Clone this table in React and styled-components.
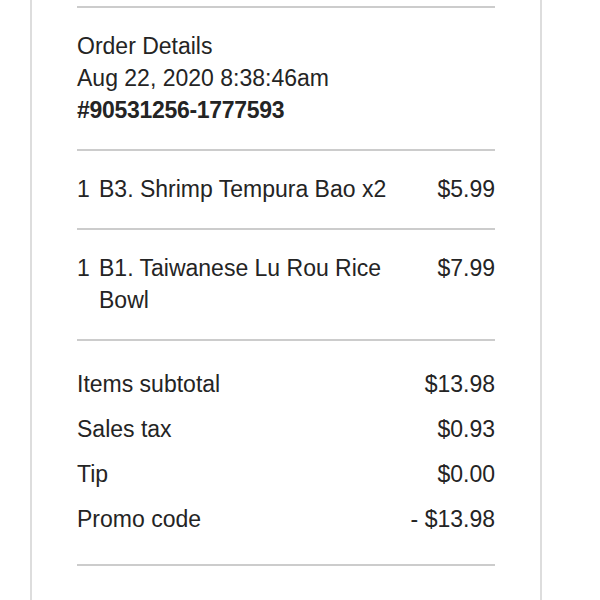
import React from 'react';
import styled, { createGlobalStyle } from 'styled-components';

const GlobalStyle = createGlobalStyle`
  html, body {
    margin: 0;
    padding: 0;
    background: #ffffff;
  }
  body {
    font-family: 'Liberation Sans', Arial, Helvetica, sans-serif;
    color: #242424;
  }
`;

const Page = styled.div`
  height: 600px;
  overflow: hidden;
  padding-left: 30px;
`;

const Card = styled.div`
  width: 512px;
  min-height: 600px;
  box-sizing: border-box;
  border-left: 2px solid #dddddd;
  border-right: 2px solid #dddddd;
  padding: 6px 45px 0;
  background: #ffffff;
  font-size: 23px;
  line-height: 32px;
`;

const Section = styled.div`
  border-top: 2px solid #cccccc;
  padding: ${(p) => p.$pad || '22px 0 23px'};
`;

const Line = styled.div`
  font-weight: ${(p) => (p.$bold ? 700 : 400)};
  letter-spacing: ${(p) => (p.$bold ? '-0.3px' : 'normal')};
`;

const ItemRow = styled.div`
  display: flex;
  align-items: flex-start;
`;

const Qty = styled.div`
  flex: 0 0 22px;
`;

const Name = styled.div`
  flex: 1;
  padding-right: 24px;
`;

const Price = styled.div`
  text-align: right;
  white-space: nowrap;
`;

const Summary = styled.div`
  display: flex;
  flex-direction: column;
  gap: 13px;
`;

const SummaryRow = styled.div`
  display: flex;
  justify-content: space-between;
`;

const items = [
  { qty: 1, name: 'B3. Shrimp Tempura Bao x2', price: '$5.99' },
  { qty: 1, name: 'B1. Taiwanese Lu Rou Rice Bowl', price: '$7.99' },
];

const totals = [
  ['Items subtotal', '$13.98'],
  ['Sales tax', '$0.93'],
  ['Tip', '$0.00'],
  ['Promo code', '- $13.98'],
];

export default function App() {
  return (
    <>
      <GlobalStyle />
      <Page>
        <Card>
          <Section>
            <Line>Order Details</Line>
            <Line>Aug 22, 2020 8:38:46am</Line>
            <Line $bold>#90531256-1777593</Line>
          </Section>
          {items.map((item) => (
            <Section key={item.name}>
              <ItemRow>
                <Qty>{item.qty}</Qty>
                <Name>{item.name}</Name>
                <Price>{item.price}</Price>
              </ItemRow>
            </Section>
          ))}
          <Section $pad="27px 0 29px">
            <Summary>
              {totals.map(([label, value]) => (
                <SummaryRow key={label}>
                  <span>{label}</span>
                  <span>{value}</span>
                </SummaryRow>
              ))}
            </Summary>
          </Section>
          <Section $pad="40px 0 0" />
        </Card>
      </Page>
    </>
  );
}
